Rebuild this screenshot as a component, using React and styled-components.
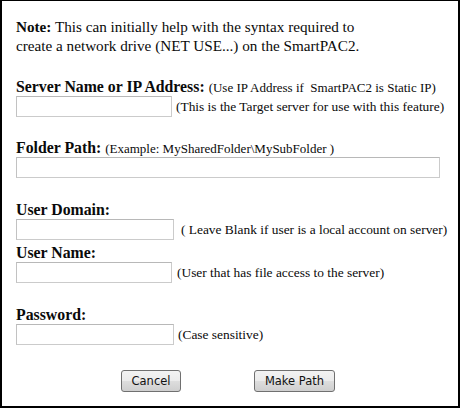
import React from 'react';
import styled, { createGlobalStyle } from 'styled-components';

const GlobalStyle = createGlobalStyle`
  html, body {
    margin: 0;
    padding: 0;
    background: #ffffff;
  }
`;

const Panel = styled.div`
  box-sizing: border-box;
  width: 460px;
  height: 408px;
  border: 2px solid #000;
  border-top-width: 1px;
  background: #fff;
  padding: 0 0 0 14px;
  font-family: "Liberation Serif", "Times New Roman", serif;
  color: #0a0a0a;
  display: flex;
  flex-direction: column;
`;

const Note = styled.p`
  margin: 16px 0 0 0;
  font-size: 15.2px;
  line-height: 19px;
`;

const Section = styled.div`
  margin-top: ${p => p.$gap || 0}px;
  display: flex;
  flex-direction: column;
`;

const Heading = styled.div`
  height: 17px;
  font-size: 15.8px;
  font-weight: bold;
  line-height: 17px;
  white-space: nowrap;
`;

const Hint = styled.span`
  font-weight: normal;
  font-size: ${p => p.$size || 13.4}px;
`;

const Row = styled.div`
  display: flex;
  align-items: center;
  gap: ${p => p.$gap || 4}px;
  margin-top: 1px;
  font-size: 13.4px;
  white-space: nowrap;
`;

const Field = styled.input`
  box-sizing: border-box;
  width: ${p => p.$w || 158}px;
  height: 21px;
  border: 1px solid #cbcbcb;
  border-top-color: #b8b8b8;
  border-left-color: #c2c2c2;
  background: #fff;
  margin: 0;
  padding: 0 3px;
`;

const Actions = styled.div`
  display: flex;
  gap: 73px;
  margin-top: 25px;
  padding-left: 105px;
`;

const Button = styled.button`
  box-sizing: border-box;
  height: 22px;
  width: ${p => p.$w}px;
  padding: 0;
  border: 1px solid #707070;
  border-radius: 3px;
  background: linear-gradient(#f2f2f2 0%, #ebebeb 48%, #dddddd 52%, #cfcfcf 100%);
  font-family: "DejaVu Sans", Tahoma, sans-serif;
  font-size: 11.5px;
  color: #111;
`;

export default function App() {
  return (
    <>
      <GlobalStyle />
      <Panel>
        <Note>
          <b>Note:</b> This can initially help with the syntax required to
          <br />
          create a network drive (NET USE...) on the SmartPAC2.
        </Note>

        <Section $gap={23}>
          <Heading>
            Server Name or IP Address: <Hint $size={13}>(Use IP Address if&nbsp; SmartPAC2 is Static IP)</Hint>
          </Heading>
          <Row>
            <Field type="text" $w={156} />
            <span>(This is the Target server for use with this feature)</span>
          </Row>
        </Section>

        <Section $gap={22}>
          <Heading>
            Folder Path: <Hint $size={13}>(Example: MySharedFolder\MySubFolder )</Hint>
          </Heading>
          <Row>
            <Field type="text" $w={424} />
          </Row>
        </Section>

        <Section $gap={23}>
          <Heading>User Domain:</Heading>
          <Row $gap={7}>
            <Field type="text" />
            <span>( Leave Blank if user is a local account on server)</span>
          </Row>
        </Section>

        <Section $gap={4}>
          <Heading>User Name:</Heading>
          <Row $gap={5}>
            <Field type="text" $w={156} />
            <span>(User that has file access to the server)</span>
          </Row>
        </Section>

        <Section $gap={23}>
          <Heading>Password:</Heading>
          <Row>
            <Field type="password" />
            <span>(Case sensitive)</span>
          </Row>
        </Section>

        <Actions>
          <Button $w={60}>Cancel</Button>
          <Button $w={81}>Make Path</Button>
        </Actions>
      </Panel>
    </>
  );
}
